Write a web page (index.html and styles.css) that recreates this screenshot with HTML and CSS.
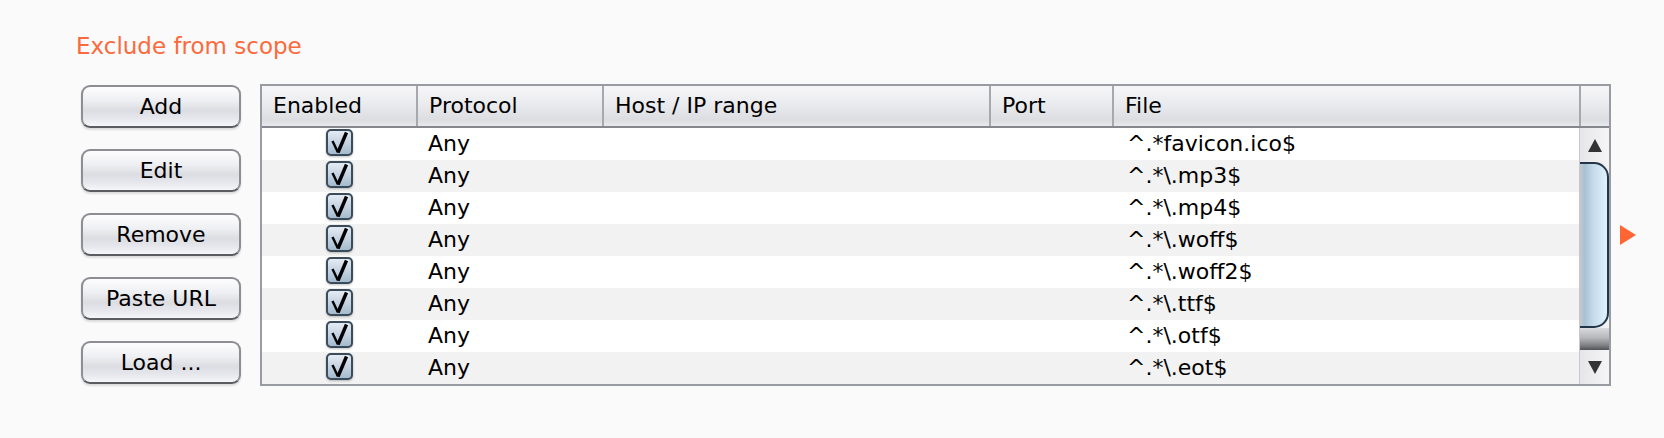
FILE: index.html
```html
<!DOCTYPE html>
<html>
<head>
<meta charset="utf-8">
<link rel="stylesheet" href="styles.css">
</head>
<body>
<div class="page">
  <div class="title">Exclude from scope</div>
  <div class="main">
    <div class="buttons">
      <button class="btn">Add</button>
      <button class="btn">Edit</button>
      <button class="btn">Remove</button>
      <button class="btn">Paste URL</button>
      <button class="btn">Load ...</button>
    </div>
    <div class="table">
      <div class="thead">
        <div class="th c1">Enabled</div>
        <div class="th c2 sep">Protocol</div>
        <div class="th c3 sep">Host / IP range</div>
        <div class="th c4 sep">Port</div>
        <div class="th c5 sep">File</div>
        <div class="th corner sep"></div>
      </div>
      <div class="tbody">
        <div class="rows">
          <div class="row"><div class="td c1"><svg class="cb" viewBox="0 0 27 28" width="27" height="28"><defs><linearGradient id="g" x1="0" y1="0" x2="0" y2="1"><stop offset="0" stop-color="#e6eef5"/><stop offset="1" stop-color="#a2b9cd"/></linearGradient></defs><rect x="1" y="1" width="25" height="25" rx="4" fill="url(#g)" stroke="#3a4c5b" stroke-width="2"/><path d="M6.5 12 L12 23.5" stroke="#000" stroke-width="2.4" fill="none"/><path d="M12 23.5 L20.5 3.5" stroke="#000" stroke-width="3.4" fill="none"/></svg></div><div class="td c2">Any</div><div class="td c3"></div><div class="td c4"></div><div class="td c5">^.*favicon.ico$</div></div>
          <div class="row"><div class="td c1"><svg class="cb" viewBox="0 0 27 28" width="27" height="28"><rect x="1" y="1" width="25" height="25" rx="4" fill="url(#g)" stroke="#3a4c5b" stroke-width="2"/><path d="M6.5 12 L12 23.5" stroke="#000" stroke-width="2.4" fill="none"/><path d="M12 23.5 L20.5 3.5" stroke="#000" stroke-width="3.4" fill="none"/></svg></div><div class="td c2">Any</div><div class="td c3"></div><div class="td c4"></div><div class="td c5">^.*\.mp3$</div></div>
          <div class="row"><div class="td c1"><svg class="cb" viewBox="0 0 27 28" width="27" height="28"><rect x="1" y="1" width="25" height="25" rx="4" fill="url(#g)" stroke="#3a4c5b" stroke-width="2"/><path d="M6.5 12 L12 23.5" stroke="#000" stroke-width="2.4" fill="none"/><path d="M12 23.5 L20.5 3.5" stroke="#000" stroke-width="3.4" fill="none"/></svg></div><div class="td c2">Any</div><div class="td c3"></div><div class="td c4"></div><div class="td c5">^.*\.mp4$</div></div>
          <div class="row"><div class="td c1"><svg class="cb" viewBox="0 0 27 28" width="27" height="28"><rect x="1" y="1" width="25" height="25" rx="4" fill="url(#g)" stroke="#3a4c5b" stroke-width="2"/><path d="M6.5 12 L12 23.5" stroke="#000" stroke-width="2.4" fill="none"/><path d="M12 23.5 L20.5 3.5" stroke="#000" stroke-width="3.4" fill="none"/></svg></div><div class="td c2">Any</div><div class="td c3"></div><div class="td c4"></div><div class="td c5">^.*\.woff$</div></div>
          <div class="row"><div class="td c1"><svg class="cb" viewBox="0 0 27 28" width="27" height="28"><rect x="1" y="1" width="25" height="25" rx="4" fill="url(#g)" stroke="#3a4c5b" stroke-width="2"/><path d="M6.5 12 L12 23.5" stroke="#000" stroke-width="2.4" fill="none"/><path d="M12 23.5 L20.5 3.5" stroke="#000" stroke-width="3.4" fill="none"/></svg></div><div class="td c2">Any</div><div class="td c3"></div><div class="td c4"></div><div class="td c5">^.*\.woff2$</div></div>
          <div class="row"><div class="td c1"><svg class="cb" viewBox="0 0 27 28" width="27" height="28"><rect x="1" y="1" width="25" height="25" rx="4" fill="url(#g)" stroke="#3a4c5b" stroke-width="2"/><path d="M6.5 12 L12 23.5" stroke="#000" stroke-width="2.4" fill="none"/><path d="M12 23.5 L20.5 3.5" stroke="#000" stroke-width="3.4" fill="none"/></svg></div><div class="td c2">Any</div><div class="td c3"></div><div class="td c4"></div><div class="td c5">^.*\.ttf$</div></div>
          <div class="row"><div class="td c1"><svg class="cb" viewBox="0 0 27 28" width="27" height="28"><rect x="1" y="1" width="25" height="25" rx="4" fill="url(#g)" stroke="#3a4c5b" stroke-width="2"/><path d="M6.5 12 L12 23.5" stroke="#000" stroke-width="2.4" fill="none"/><path d="M12 23.5 L20.5 3.5" stroke="#000" stroke-width="3.4" fill="none"/></svg></div><div class="td c2">Any</div><div class="td c3"></div><div class="td c4"></div><div class="td c5">^.*\.otf$</div></div>
          <div class="row"><div class="td c1"><svg class="cb" viewBox="0 0 27 28" width="27" height="28"><rect x="1" y="1" width="25" height="25" rx="4" fill="url(#g)" stroke="#3a4c5b" stroke-width="2"/><path d="M6.5 12 L12 23.5" stroke="#000" stroke-width="2.4" fill="none"/><path d="M12 23.5 L20.5 3.5" stroke="#000" stroke-width="3.4" fill="none"/></svg></div><div class="td c2">Any</div><div class="td c3"></div><div class="td c4"></div><div class="td c5">^.*\.eot$</div></div>
        </div>
        <div class="scrollbar">
          <div class="sb-btn"><span class="tri-up"></span></div>
          <div class="thumb"></div>
          <div class="trough"></div>
          <div class="sb-btn"><span class="tri-down"></span></div>
        </div>
      </div>
    </div>
    <div class="arrow"></div>
  </div>
</div>
</body>
</html>
```

FILE: styles.css
```css
* { box-sizing: border-box; }
html, body { margin: 0; padding: 0; }
body {
  background: #fafafa;
  font-family: "DejaVu Sans", "Liberation Sans", sans-serif;
  color: #000;
  width: 1664px;
  height: 438px;
  overflow: hidden;
}
.page { padding: 31px 0 0 76px; }
.title {
  color: #fb6a3c;
  font-size: 23px;
  line-height: 30px;
  height: 30px;
  white-space: nowrap;
}
.main {
  display: flex;
  align-items: flex-start;
  margin-top: 23px;
}
.buttons {
  display: flex;
  flex-direction: column;
  gap: 21px;
  margin-left: 5px;
  padding-top: 1px;
  width: 160px;
}
.btn {
  width: 160px;
  height: 43px;
  border: 2px solid #8c8e94;
  border-bottom-color: #5a5c62;
  border-radius: 9px;
  background: linear-gradient(to bottom, #fdfdfe 0%, #eeeff2 35%, #dcdde2 60%, #e6e7ec 80%, #f6f6f9 100%);
  box-shadow: 0 2px 2px rgba(0,0,0,0.12);
  font-family: "DejaVu Sans", "Liberation Sans", sans-serif;
  font-size: 22px;
  color: #000;
  padding: 0;
  line-height: 1;
}
.table {
  margin-left: 19px;
  width: 1351px;
  border: 2px solid #999ba3;
  background: #fff;
}
.thead {
  display: flex;
  height: 42px;
  border-bottom: 2px solid #85878e;
  background: linear-gradient(to bottom, #f6f6f8 0%, #eaebee 45%, #dcdde1 85%, #e8e9ec 100%);
}
.th {
  font-size: 22px;
  line-height: 40px;
  padding-left: 11px;
  white-space: nowrap;
}
.th.sep { border-left: 2px solid #a6a8ae; }
.c1 { width: 154px; }
.c2 { width: 186px; }
.c3 { width: 387px; }
.c4 { width: 123px; }
.c5 { width: 467px; }
.corner { width: 29px; }
.td.c2, .td.c3, .td.c4 { padding-left: 12px; }
.td.c5 { padding-left: 15px; }
.tbody { display: flex; }
.rows { width: 1317px; }
.row {
  display: flex;
  height: 32px;
  background: #fff;
}
.row:nth-child(even) { background: #f2f2f2; }
.td {
  font-size: 22px;
  line-height: 32px;
  white-space: nowrap;
  color: #000;
}
.td.c1 {
  display: flex;
  justify-content: center;
  align-items: flex-start;
  padding-top: 1px;
}
.cb { display: block; filter: drop-shadow(0 1px 1px rgba(0,0,0,0.25)); }
.scrollbar {
  width: 30px;
  height: 256px;
  display: flex;
  flex-direction: column;
  border-left: 1px solid #c9c9cc;
  background: linear-gradient(to right, #e2e3e6, #f3f3f5);
}
.sb-btn {
  height: 34px;
  display: flex;
  justify-content: center;
  align-items: center;
  background: linear-gradient(to right, #e6e6e9, #f5f5f7);
}
.tri-up {
  width: 0; height: 0;
  border-left: 7px solid transparent;
  border-right: 7px solid transparent;
  border-bottom: 13px solid #333;
}
.tri-down {
  width: 0; height: 0;
  border-left: 7px solid transparent;
  border-right: 7px solid transparent;
  border-top: 13px solid #333;
}
.thumb {
  height: 166px;
  border: 2px solid #22364a;
  border-left: none;
  border-radius: 0 15px 15px 0;
  background: linear-gradient(to right, #c4c8cc 0%, #a9c0d4 18%, #c6dcec 50%, #e0f1fa 100%);
}
.trough {
  height: 22px;
  background: linear-gradient(to bottom, #dadbde 0%, #b4b6ba 45%, #7c7e82 80%, #505256 100%);
}
.arrow {
  align-self: center;
  margin-left: 9px;
  width: 0; height: 0;
  border-left: 16px solid #ff6633;
  border-top: 10px solid transparent;
  border-bottom: 10px solid transparent;
}
```
